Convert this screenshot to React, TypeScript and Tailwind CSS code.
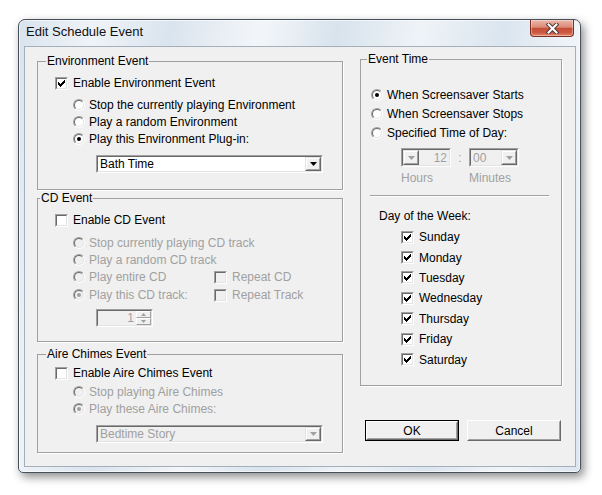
import React from "react";

const gray = "text-[#a0a0a0]";

function Tick() {
  // classic 7x7 check mark, drawn as pixel columns
  const cols = [2, 3, 4, 3, 2, 1, 0];
  return (
    <svg width="7" height="7" viewBox="0 0 7 7" shapeRendering="crispEdges">
      {cols.map((y, x) => (
        <rect key={x} x={x} y={y} width="1" height="3" fill="#000" />
      ))}
    </svg>
  );
}

function Check({ checked = false, disabled = false }: { checked?: boolean; disabled?: boolean }) {
  return (
    <span className="flex h-[13px] w-[13px] shrink-0 border border-t-[#a0a0a0] border-l-[#a0a0a0] border-r-white border-b-white">
      <span
        className={
          "flex flex-1 items-center justify-center border border-t-[#696969] border-l-[#696969] border-r-[#e3e3e3] border-b-[#e3e3e3] " +
          (disabled ? "bg-[#f0f0f0]" : "bg-white")
        }
      >
        {checked && <Tick />}
      </span>
    </span>
  );
}

function Radio({ checked = false, disabled = false }: { checked?: boolean; disabled?: boolean }) {
  return (
    <span className="flex h-[12px] w-[12px] shrink-0 rounded-full border border-t-[#a0a0a0] border-l-[#a0a0a0] border-r-white border-b-white">
      <span
        className={
          "flex flex-1 items-center justify-center rounded-full border border-t-[#696969] border-l-[#696969] border-r-[#e3e3e3] border-b-[#e3e3e3] " +
          (disabled ? "bg-[#f0f0f0]" : "bg-white")
        }
      >
        {checked && (
          <span className={"h-[4px] w-[4px] rounded-full " + (disabled ? "bg-[#a0a0a0]" : "bg-black")} />
        )}
      </span>
    </span>
  );
}

function Tri({ up = false, disabled = false, w = 7 }: { up?: boolean; disabled?: boolean; w?: number }) {
  const h = Math.ceil(w / 2);
  const d = up ? `M0 ${h}H${w}L${w / 2} 0Z` : `M0 0H${w}L${w / 2} ${h}Z`;
  return (
    <svg width={w} height={h} viewBox={`0 0 ${w} ${h}`}>
      <path d={d} fill={disabled ? "#a0a0a0" : "#000"} />
    </svg>
  );
}

function ArrowBtn({ disabled = false }: { disabled?: boolean }) {
  return (
    <span className="flex h-full w-[16px] shrink-0 border border-t-[#e3e3e3] border-l-[#e3e3e3] border-r-[#696969] border-b-[#696969]">
      <span className="flex flex-1 items-center justify-center border border-t-white border-l-white border-r-[#a0a0a0] border-b-[#a0a0a0] bg-[#f0f0f0]">
        <Tri disabled={disabled} />
      </span>
    </span>
  );
}

function Sunken({ className, disabled = false, children }: { className: string; disabled?: boolean; children: React.ReactNode }) {
  return (
    <div className={"flex border border-t-[#a0a0a0] border-l-[#a0a0a0] border-r-white border-b-white " + className}>
      <div
        className={
          "flex flex-1 items-center border border-t-[#696969] border-l-[#696969] border-r-[#e3e3e3] border-b-[#e3e3e3] " +
          (disabled ? "bg-[#f0f0f0] text-[#a0a0a0]" : "bg-white")
        }
      >
        {children}
      </div>
    </div>
  );
}

function Combo({ text, disabled = false }: { text: string; disabled?: boolean }) {
  return (
    <Sunken className="ml-[58px] h-[18px] w-[227px]" disabled={disabled}>
      <span className="flex-1 pl-[2px]">{text}</span>
      <ArrowBtn disabled={disabled} />
    </Sunken>
  );
}

function RadioRow({ label, checked, disabled, className }: { label: string; checked?: boolean; disabled?: boolean; className: string }) {
  return (
    <div className={"flex h-[16px] items-center gap-[4px] " + className}>
      <Radio checked={checked} disabled={disabled} />
      <span className={disabled ? gray : ""}>{label}</span>
    </div>
  );
}

function CheckRow({ label, checked, disabled, className }: { label: string; checked?: boolean; disabled?: boolean; className: string }) {
  return (
    <div className={"flex items-center gap-[5px] " + className}>
      <Check checked={checked} disabled={disabled} />
      <span className={disabled ? gray : ""}>{label}</span>
    </div>
  );
}

function Group({ title, className, legendClass, children }: { title: string; className: string; legendClass: string; children: React.ReactNode }) {
  return (
    <fieldset className={"border border-[#a0a0a0] shadow-[1px_1px_0_#ffffff] " + className}>
      <legend className={"px-[1px] leading-[14px] " + legendClass}>{title}</legend>
      <div className="flex flex-col">{children}</div>
    </fieldset>
  );
}

function Button({ label, primary = false }: { label: string; primary?: boolean }) {
  const inner = (
    <span className="flex flex-1 border border-t-white border-l-white border-r-[#696969] border-b-[#696969]">
      <span className="flex flex-1 items-center justify-center border border-t-[#f0f0f0] border-l-[#f0f0f0] border-r-[#a0a0a0] border-b-[#a0a0a0] bg-[#f0f0f0]">
        {label}
      </span>
    </span>
  );
  return primary ? (
    <div className="flex h-[21px] w-[94px] border border-black">{inner}</div>
  ) : (
    <div className="flex h-[21px] w-[94px]">{inner}</div>
  );
}

function CloseButton() {
  return (
    <div className="mr-[6px] flex h-[17px] w-[44px] items-center justify-center rounded-b-[4px] border border-t-0 border-[#7a2f24] bg-[linear-gradient(#ecb7a9,#dc8b79_45%,#c54e38_52%,#cd5a43_80%,#e58a70)] shadow-[inset_0_0_0_1px_rgba(255,255,255,0.35)]">
      <svg width="13" height="11" viewBox="0 0 13 11">
        <path d="M2.5 1.5L10.5 9.5M10.5 1.5L2.5 9.5" stroke="#4a3a38" strokeWidth="4" strokeLinecap="square" />
        <path d="M2.5 1.5L10.5 9.5M10.5 1.5L2.5 9.5" stroke="#ffffff" strokeWidth="2" strokeLinecap="square" />
      </svg>
    </div>
  );
}

const days = ["Sunday", "Monday", "Tuesday", "Wednesday", "Thursday", "Friday", "Saturday"];

export default function App() {
  return (
    <div className="min-h-[495px] bg-white pl-[18px] pt-[19px] font-['Liberation_Sans',Arial,sans-serif] text-[12px] leading-[14px] text-black">
      <div className="flex h-[454px] w-[563px] flex-col rounded-t-[7px] rounded-b-[5px] border border-[#46515c] bg-[linear-gradient(100deg,#d9e3ed_0%,#eef3f8_12%,#dae4ee_24%,#f3f6f9_38%,#d8e3ed_50%,#eef3f7_63%,#dbe5ef_76%,#f1f5f8_88%,#dce6ef_100%)] shadow-[3px_4px_10px_rgba(0,0,0,0.45),inset_0_0_0_1px_rgba(255,255,255,0.6)]">
        <div className="flex h-[26px] shrink-0 items-start">
          <div className="flex-1 pl-[7px] pt-[4px] text-[13px] leading-[16px] text-[#111]">Edit Schedule Event</div>
          <CloseButton />
        </div>

        <div className="ml-[5px] flex h-[421px] w-[552px] items-start border border-[#a3afbb] bg-[#f0f0f0]">
          {/* left column */}
          <div className="ml-[12px] mt-[7px] flex w-[306px] flex-col">
            <Group title="Environment Event" className="h-[136px]" legendClass="ml-[8px]">
              <CheckRow label="Enable Environment Event" checked className="mt-[7px] h-[16px] pl-[17px]" />
              <RadioRow label="Stop the currently playing Environment" className="mt-[6px] pl-[35px]" />
              <RadioRow label="Play a random Environment" className="mt-[1px] pl-[35px]" />
              <RadioRow label="Play this Environment Plug-in:" checked className="mt-[1px] pl-[35px]" />
              <div className="mt-[8px]">
                <Combo text="Bath Time" />
              </div>
            </Group>

            <Group title="CD Event" className="mt-[1px] h-[151px]" legendClass="ml-[2px]">
              <CheckRow label="Enable CD Event" className="mt-[7px] h-[16px] pl-[17px]" />
              <RadioRow label="Stop currently playing CD track" disabled className="mt-[7px] pl-[35px]" />
              <RadioRow label="Play a random CD track" disabled className="mt-[1px] pl-[35px]" />
              <div className="mt-[1px] flex h-[16px] items-center pl-[35px]">
                <RadioRow label="Play entire CD" disabled className="w-[141px]" />
                <CheckRow label="Repeat CD" disabled className="h-[16px]" />
              </div>
              <div className="mt-[2px] flex h-[16px] items-center pl-[35px]">
                <RadioRow label="Play this CD track:" checked disabled className="w-[141px]" />
                <CheckRow label="Repeat Track" disabled className="h-[16px]" />
              </div>
              <Sunken className="ml-[58px] mt-[6px] h-[18px] w-[57px]" disabled>
                <span className="flex-1 pr-[2px] text-right">1</span>
                <span className="flex h-full w-[15px] flex-col">
                  <span className="flex flex-1 items-center justify-center border border-t-white border-l-white border-r-[#a0a0a0] border-b-[#a0a0a0] bg-[#f0f0f0]">
                    <Tri up disabled w={5} />
                  </span>
                  <span className="flex flex-1 items-center justify-center border border-t-white border-l-white border-r-[#a0a0a0] border-b-[#a0a0a0] bg-[#f0f0f0]">
                    <Tri disabled w={5} />
                  </span>
                </span>
              </Sunken>
            </Group>

            <Group title="Aire Chimes Event" className="mt-[5px] h-[106px]" legendClass="ml-[8px]">
              <CheckRow label="Enable Aire Chimes Event" className="mt-[4px] h-[16px] pl-[17px]" />
              <RadioRow label="Stop playing Aire Chimes" disabled className="mt-[3px] pl-[35px]" />
              <RadioRow label="Play these Aire Chimes:" checked disabled className="mt-[1px] pl-[35px]" />
              <div className="mt-[8px]">
                <Combo text="Bedtime Story" disabled />
              </div>
            </Group>
          </div>

          {/* right column */}
          <div className="ml-[17px] mt-[5px] flex w-[202px] flex-col">
            <Group title="Event Time" className="h-[334px]" legendClass="ml-[6px]">
              <RadioRow label="When Screensaver Starts" checked className="mt-[21px] pl-[10px]" />
              <RadioRow label="When Screensaver Stops" className="mt-[3px] pl-[10px]" />
              <RadioRow label="Specified Time of Day:" className="mt-[3px] pl-[10px]" />
              <div className="mt-[7px] flex h-[19px] pl-[40px]">
                <Sunken className="h-[19px] w-[50px]" disabled>
                  <ArrowBtn disabled />
                  <span className="flex-1 pr-[2px] text-right">12</span>
                </Sunken>
                <span className={"flex w-[18px] items-center justify-center " + gray}>:</span>
                <Sunken className="h-[19px] w-[50px]" disabled>
                  <span className="flex-1 pl-[2px]">00</span>
                  <ArrowBtn disabled />
                </Sunken>
              </div>
              <div className={"mt-[3px] flex h-[16px] items-center pl-[40px] " + gray}>
                <span className="w-[68px]">Hours</span>
                <span>Minutes</span>
              </div>
              <div className="ml-[9px] mt-[9px] h-[2px] w-[179px] border-t border-b border-t-[#a0a0a0] border-b-white" />
              <div className="mt-[11px] flex h-[16px] items-center pl-[18px]">Day of the Week:</div>
              <div className="mt-[3px] flex flex-col">
                {days.map((d) => (
                  <CheckRow key={d} label={d} checked className="h-[20.4px] pl-[40px]" />
                ))}
              </div>
            </Group>
            <div className="ml-[5px] mt-[34px] flex gap-[8px]">
              <Button label="OK" primary />
              <Button label="Cancel" />
            </div>
          </div>
        </div>
      </div>
    </div>
  );
}
